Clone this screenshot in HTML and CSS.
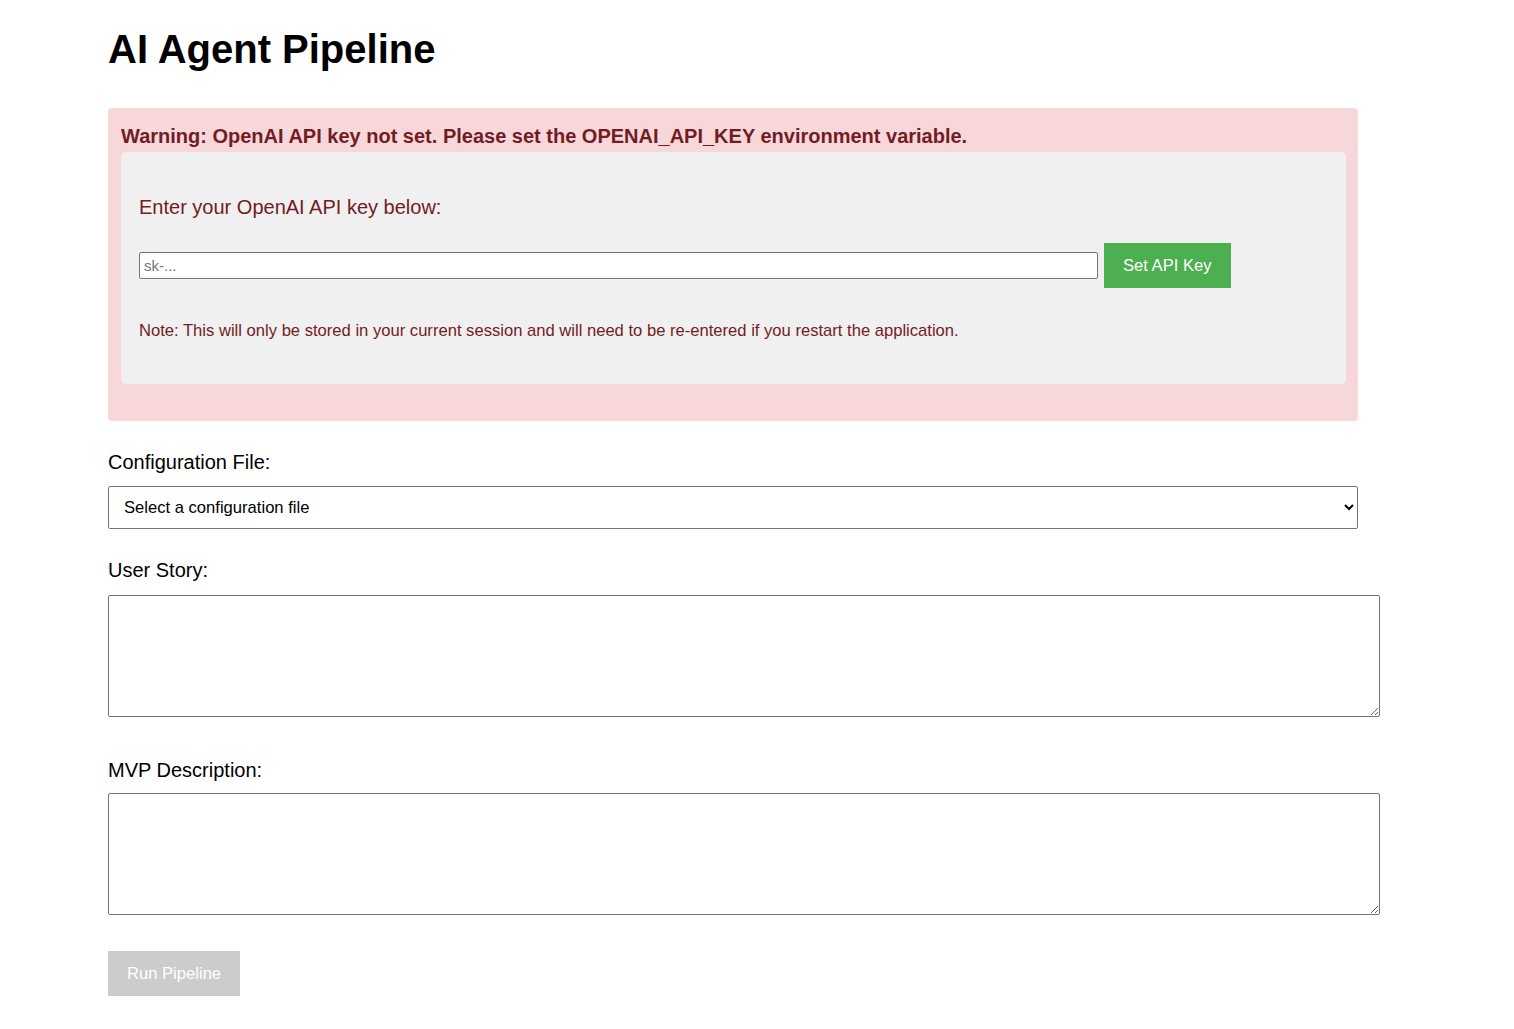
FILE: index.html
```html
<!DOCTYPE html>
<html lang="en">
<head>
<meta charset="utf-8">
<title>AI Agent Pipeline</title>
<link rel="stylesheet" href="styles.css">
</head>
<body>
<div class="container">
  <h1 class="title">AI Agent Pipeline</h1>

  <div class="warning">
    <p class="warning-text">Warning: OpenAI API key not set. Please set the OPENAI_API_KEY environment variable.</p>
    <div class="key-box">
      <p class="key-intro">Enter your OpenAI API key below:</p>
      <div class="key-row">
        <input class="key-input" type="password" placeholder="sk-...">
        <button class="btn btn-green" type="button">Set API Key</button>
      </div>
      <p class="key-note">Note: This will only be stored in your current session and will need to be re-entered if you restart the application.</p>
    </div>
  </div>

  <div class="field field-config">
    <label class="field-label" for="config">Configuration File:</label>
    <select class="field-select" id="config">
      <option>Select a configuration file</option>
    </select>
  </div>

  <div class="field field-story">
    <label class="field-label" for="story">User Story:</label>
    <textarea class="field-text" id="story"></textarea>
  </div>

  <div class="field field-mvp">
    <label class="field-label label-mvp" for="mvp">MVP Description:</label>
    <textarea class="field-text" id="mvp"></textarea>
  </div>

  <button class="btn btn-disabled" type="button" disabled>Run Pipeline</button>
</div>
</body>
</html>
```

FILE: styles.css
```css
html, body {
  margin: 0;
  padding: 0;
  background: #ffffff;
}

body {
  font-family: "Liberation Sans", Arial, sans-serif;
  color: #000000;
}

.container {
  width: 1250px;
  padding: 0 0 40px 108px;
}

.title {
  margin: 27px 0 36px;
  font-size: 40px;
  line-height: 45px;
  font-weight: bold;
}

.warning {
  background: #f8d7da;
  color: #721c24;
  border-radius: 4px;
  padding: 17px 12px 37px 13px;
}

.warning-text {
  margin: 0 0 4px;
  font-size: 20px;
  line-height: 23px;
  font-weight: bold;
}

.key-box {
  background: #f0f0f0;
  border-radius: 5px;
  padding: 20px 18px;
}

.key-intro {
  margin: 24px 0 24px;
  font-size: 20px;
  line-height: 23px;
}

.key-row {
  display: flex;
  align-items: center;
  gap: 6px;
}

.key-input {
  box-sizing: border-box;
  width: 959px;
  height: 27px;
  padding: 0 4px 1px;
  border: 1px solid #767676;
  border-radius: 2px;
  background: #ffffff;
  font-family: inherit;
  font-size: 15px;
  color: #000000;
}

.key-input::placeholder {
  color: #757575;
}

.key-note {
  margin: 33px 0 24px;
  font-size: 16.6px;
  line-height: 19px;
}

.btn {
  border: none;
  border-radius: 0;
  padding: 13px 19px;
  font-family: inherit;
  font-size: 16.6px;
  line-height: 19px;
  color: #ffffff;
  cursor: pointer;
}

.btn-green {
  background: #4caf50;
}

.btn-disabled {
  display: block;
  margin-top: 36px;
  background: #cccccc;
  cursor: not-allowed;
}

.field-config {
  margin-top: 30px;
}

.field-story {
  margin-top: 30px;
}

.field-mvp {
  margin-top: 42px;
}

.field-label {
  display: block;
  font-size: 20px;
  line-height: 23px;
  margin-bottom: 13px;
}

.field-config .field-label {
  margin-bottom: 12px;
}

.label-mvp {
  margin-bottom: 11px;
}

.field-select {
  display: block;
  box-sizing: border-box;
  width: 100%;
  height: 43px;
  padding: 0 11px;
  border: 1px solid #767676;
  border-radius: 2px;
  background: #ffffff;
  font-family: inherit;
  font-size: 16.6px;
  color: #000000;
}

.field-text {
  display: block;
  width: 100%;
  height: 100px;
  padding: 10px;
  margin: 0;
  border: 1px solid #767676;
  border-radius: 2px;
  font-family: inherit;
  font-size: 16px;
}
```
